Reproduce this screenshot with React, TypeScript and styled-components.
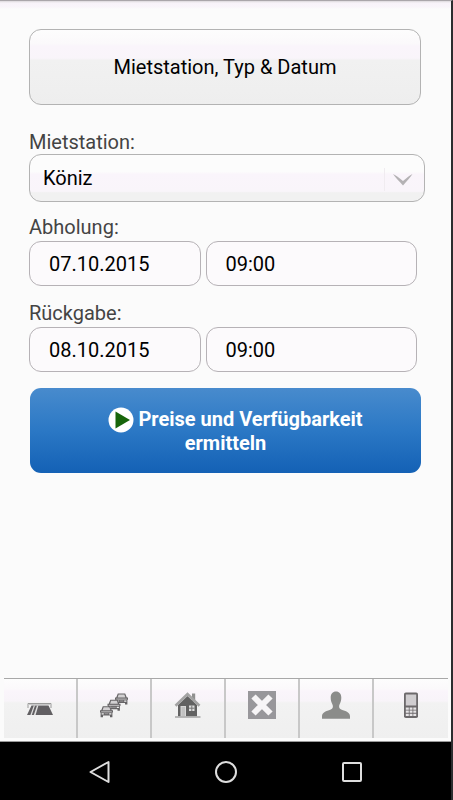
import React, { useState } from 'react';
import styled, { createGlobalStyle } from 'styled-components';

const GlobalStyle = createGlobalStyle`
  *, *::before, *::after { box-sizing: border-box; }
  body {
    margin: 0;
    font-family: Roboto, "Liberation Sans", sans-serif;
    font-size: 20px;
    line-height: 24px;
    color: #000;
    background: #fbfbfb;
  }
  button, input, select { font: inherit; color: inherit; }
`;

const Screen = styled.div`
  display: flex;
  flex-direction: column;
  min-height: 100vh;
  border-top: 1px solid #aaa6aa;
  border-right: 2px solid #2c2d2f;
  background: linear-gradient(#dcd8dc, #f8f3f9 2px, #f9f5fa 6px, #fbfbfb 8px);
`;

const Form = styled.form`
  flex: 1;
  display: flex;
  flex-direction: column;
  padding: 28px 26px 24px 29px;
`;

const StepButton = styled.button`
  height: 76px;
  margin: 0 4px 25px 0;
  padding: 0 16px;
  border: 1px solid #b3b3b3;
  border-radius: 12px;
  background: linear-gradient(#fdfdfd, #fbf9fb 18%, #faf5fb 22%, #f9f5fa 38%, #f1f1f1 41%, #eeeeee);
  cursor: pointer;
`;

const Label = styled.label`
  color: #444;
`;

const SelectBox = styled.div`
  position: relative;
  margin-bottom: 13px;
`;

const Select = styled.select`
  display: block;
  width: 100%;
  height: 48px;
  padding: 0 48px 0 13px;
  border: 1px solid #b3b3b3;
  border-radius: 12px;
  appearance: none;
  background: linear-gradient(#fcfcfc 36%, #faf5fb 42%, #f9f5fa 79%, #f1f1f1 82%);
`;

const SelectArrow = styled.svg`
  position: absolute;
  top: 14px;
  right: 10px;
  width: 32px;
  height: 24px;
  pointer-events: none;
`;

const DateGroup = styled.fieldset`
  display: flex;
  flex-direction: column;
  gap: 2px;
  min-width: 0;
  margin: 0 8px 15px 0;
  padding: 0;
  border: 0;
`;

const Fields = styled.div`
  display: grid;
  grid-template-columns: 172fr 212fr;
  gap: 5px;
`;

const TextField = styled.input`
  width: 100%;
  min-width: 0;
  height: 45px;
  padding: 0 19px;
  border: 1px solid #b6b2b6;
  border-radius: 12px;
  background: #fcfafc;
`;

const SubmitButton = styled.button`
  height: 85px;
  margin: 1px 4px 0 1px;
  padding: 0 48px;
  border: 0;
  border-radius: 11px;
  color: #fff;
  font-weight: 700;
  background: linear-gradient(#488bcd, #2b78c5 50%, #1461b5);
  cursor: pointer;
`;

const PlayIcon = styled.svg`
  width: 26px;
  height: 26px;
  margin: -4px 4px -4px 20px;
  vertical-align: -3px;
`;

const TabBar = styled.nav`
  display: grid;
  grid-template-columns: repeat(6, 1fr);
  margin: 0 3px 3px 4px;
  border-top: 1px solid #a8a8a8;
`;

const Tab = styled.button`
  display: flex;
  justify-content: center;
  height: 59px;
  padding: 12px 0 0;
  border: 0;
  border-right: 2px solid #c8c8c8;
  background: linear-gradient(#fdfdfd, #fbf9fb 10px, #faf5fb 12px, #f8f4f9 22px, #f2f2f2 24px, #efefef);
  cursor: pointer;

  &:last-child { border-right: 0; }

  svg { width: 28px; height: 28px; }
`;

const SystemBar = styled.div`
  display: flex;
  justify-content: center;
  height: 59px;
  border-top: 1px solid #999;
  background: #000;
`;

const SystemButton = styled.button`
  display: flex;
  align-items: center;
  justify-content: center;
  width: 126px;
  padding: 2px 0 0;
  border: 0;
  background: transparent;
  cursor: pointer;

  svg {
    width: 24px;
    height: 24px;
    fill: none;
    stroke: #dedede;
    stroke-width: 2;
    stroke-linejoin: round;
  }
`;

const Car = ({ x, y }: { x: number; y: number }) => (
  <g transform={`translate(${x} ${y})`}>
    <path d="M2.800 0h7.400l1.600 4h1.200v2l-.6.500V11h-2.400V9.400H3V11H.6V6.500L0 6V4h1.200z" fill="#666466" />
    <path d="M3.600 1h5.800l1 3H2.600z" fill="#d2d0d2" />
    <path d="M1.200 5h10.600v1.200H1.200z" fill="#b5b3b5" />
    <path d="M1.600 7h2.200v1.200H1.600zm7.600 0h2.200v1.200H9.200z" fill="#f1f1f1" />
    <path d="M4.600 7h3.800v1H4.600z" fill="#9a989a" />
  </g>
);

const RoadIcon = () => (
  <svg viewBox="0 0 28 28" aria-hidden="true">
    <path d="M2 17v-4.500h23V17" fill="none" stroke="#9a9a9a" />
    <path d="M5.500 14.500h17L27 24H1z" fill="#615f62" />
    <path d="M2.500 13.500h22" stroke="#c9c9c9" />
    <path d="M7.800 14.500h1.200L5.800 24H4.400zM11 14.500h1.400L9.600 24H7.800z" fill="#dedede" />
  </svg>
);

const TrafficIcon = () => (
  <svg viewBox="0 0 28 28" aria-hidden="true">
    <Car x={15} y={2.5} />
    <Car x={7.5} y={8.8} />
    <Car x={0} y={15.2} />
  </svg>
);

const HomeIcon = () => (
  <svg viewBox="0 0 28 28" aria-hidden="true">
    <path d="M18 2.500h3.200v8H18z" fill="#909090" />
    <path d="M4 14l9.500-9L23 14v11.800H4z" fill="#626262" />
    <path d="M1.500 14.800L13.500 3l12 11.800" fill="none" stroke="#a3a3a3" strokeWidth="2.6" />
    <path d="M6.500 15h5.500v11H6.500z" fill="#d8d8d8" />
    <path d="M7.500 16h3.500v9H7.500z" fill="#c2c2c2" />
    <path d="M15 14.500h5.500V20H15z" fill="#ddd" />
    <path d="M17.800 14.500V20M15 17.200h5.500" stroke="#747474" />
    <path d="M1 26h25.500" stroke="#b0b0b0" strokeWidth="1.8" />
  </svg>
);

const CloseIcon = () => (
  <svg viewBox="0 0 28 28" aria-hidden="true">
    <path d="M0 0h28v28H0z" fill="#98979b" />
    <path d="M5.500 5.500l17 17M22.500 5.500l-17 17" stroke="#f7f5f7" strokeWidth="6" />
  </svg>
);

const PersonIcon = () => (
  <svg viewBox="0 0 28 28" aria-hidden="true">
    <path
      d="M14 .4c3.300 0 5.300 2.300 5.300 6.100 0 2.400-.5 4.200-1.200 5.800-.7 1.500-1 2-1 3.200 0 2 1.100 2.900 3.900 3.800 4.700 1.500 7 2.800 7 6.200v2.300H0v-2.300c0-3.400 2.300-4.700 7-6.200 2.800-.9 3.900-1.800 3.900-3.800 0-1.200-.3-1.700-1-3.200-.7-1.600-1.200-3.400-1.200-5.800C8.700 2.700 10.700.4 14 .4z"
      fill="#8b8c8a"
    />
  </svg>
);

const PhoneIcon = () => (
  <svg viewBox="0 0 28 28" aria-hidden="true">
    <rect x="7" y="1.5" width="14" height="25.5" rx="1.8" fill="#6c696b" />
    <path d="M8.800 3.500h10.400v11H8.800z" fill="#d0cdd0" />
    <path
      d="M8.800 16.500h3v2.200h-3zm3.800 0h2.900v2.200h-2.900zm3.700 0h2.900v2.200h-2.900zM8.800 19.600h3v2.200h-3zm3.800 0h2.900v2.200h-2.900zm3.700 0h2.900v2.200h-2.900zM8.800 22.700h3V25h-3zm3.800 0h2.900V25h-2.900zm3.700 0h2.900V25h-2.900z"
      fill="#e6e4e6"
    />
  </svg>
);

const tabs = [
  { name: 'Strassen', Icon: RoadIcon },
  { name: 'Verkehr', Icon: TrafficIcon },
  { name: 'Startseite', Icon: HomeIcon },
  { name: 'Abbrechen', Icon: CloseIcon },
  { name: 'Profil', Icon: PersonIcon },
  { name: 'Kontakt', Icon: PhoneIcon },
];

interface DateTimeProps {
  id: string;
  label: string;
  initialDate: string;
  initialTime: string;
}

const DateTime = ({ id, label, initialDate, initialTime }: DateTimeProps) => {
  const [date, setDate] = useState(initialDate);
  const [time, setTime] = useState(initialTime);
  return (
    <DateGroup>
      <Label htmlFor={id}>{label}:</Label>
      <Fields>
        <TextField id={id} value={date} onChange={(e) => setDate(e.target.value)} />
        <TextField aria-label={`${label} Uhrzeit`} value={time} onChange={(e) => setTime(e.target.value)} />
      </Fields>
    </DateGroup>
  );
};

export default function App() {
  return (
    <>
      <GlobalStyle />
      <Screen>
        <Form onSubmit={(e) => e.preventDefault()}>
          <StepButton type="button">Mietstation, Typ &amp; Datum</StepButton>
          <Label htmlFor="station">Mietstation:</Label>
          <SelectBox>
            <Select id="station" defaultValue="koeniz">
              <option value="koeniz">Köniz</option>
            </Select>
            <SelectArrow viewBox="0 0 32 24" aria-hidden="true">
              <path d="M1.500 0v23" stroke="#f0ecf0" />
              <path d="M10 6c3 1.500 6 3.500 10 7 4-3.500 6.500-5.500 9.500-7-2.500 3.500-5.500 7-9.500 11.500C16 13 12.500 9.500 10 6z" fill="#b4b2b4" />
            </SelectArrow>
          </SelectBox>
          <DateTime id="pickup" label="Abholung" initialDate="07.10.2015" initialTime="09:00" />
          <DateTime id="return" label="Rückgabe" initialDate="08.10.2015" initialTime="09:00" />
          <SubmitButton type="submit">
            <PlayIcon viewBox="0 0 26 26" aria-hidden="true">
              <circle cx="13" cy="13" r="12.5" fill="#fff" />
              <path d="M7.500 4.500L22 13 7.500 21.500z" fill="#17650b" />
            </PlayIcon>
            Preise und Verfügbarkeit ermitteln
          </SubmitButton>
        </Form>
        <TabBar>
          {tabs.map(({ name, Icon }) => (
            <Tab key={name} type="button" aria-label={name}>
              <Icon />
            </Tab>
          ))}
        </TabBar>
        <SystemBar>
          <SystemButton type="button" aria-label="Zurück">
            <svg viewBox="0 0 24 24"><path d="M20.500 2v20L2.500 12z" /></svg>
          </SystemButton>
          <SystemButton type="button" aria-label="Home">
            <svg viewBox="0 0 24 24"><circle cx="12" cy="12" r="10" /></svg>
          </SystemButton>
          <SystemButton type="button" aria-label="Übersicht">
            <svg viewBox="0 0 24 24"><rect x="3" y="3" width="18" height="18" rx="1" /></svg>
          </SystemButton>
        </SystemBar>
      </Screen>
    </>
  );
}
